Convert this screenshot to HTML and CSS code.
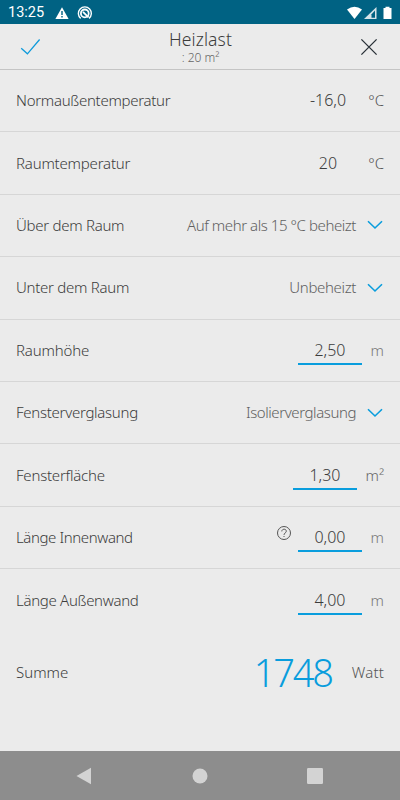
FILE: index.html
```html
<!DOCTYPE html>
<html lang="de">
<head>
<meta charset="utf-8">
<title>Heizlast</title>
<link rel="stylesheet" href="styles.css">
</head>
<body>
<div class="status">
  <span class="clock">13:25</span>
  <svg class="status-left" width="40" height="16" viewBox="0 0 40 16">
    <path d="M7 2.2 13.6 14H.4Z" fill="#fff"/><path d="M7 6v4M7 11v1.6" stroke="#006283" stroke-width="1.4"/>
    <path d="M25.7 13.4A6.5 6.5 0 1 1 34 13.4" fill="none" stroke="#fff" stroke-width="1.4"/>
    <circle cx="29.8" cy="8.4" r="3.9" fill="none" stroke="#fff" stroke-width="1.8"/>
    <path d="M28 6.8 33.5 12.3" stroke="#fff" stroke-width="1.8"/>
  </svg>
  <svg class="status-right" width="46" height="16" viewBox="0 0 46 16">
    <path d="M0 4.5Q7.5-.9 15 4.5L7.5 14Z" fill="#fff"/>
    <path d="M29.5 2V14H17Z" fill="#d5e3e9"/><path d="M24.5 9.2 28 5.6V12.8H24.5Z" fill="#006283"/>
    <path d="M36.5 3h2V1.7h4V3h2v11h-8Z" fill="#fff"/>
  </svg>
</div>
<header class="header">
  <svg width="21" height="18" viewBox="0 0 21 18"><path d="M1.2 10.2 7.4 15.8 19.6 1.5" fill="none" stroke="#0f9bdb" stroke-width="1.3"/></svg>
  <div class="heading"><h1>Heizlast</h1><p>: 20 m²</p></div>
  <svg width="18" height="18" viewBox="0 0 18 18"><path d="M1.4 1.4 16.6 16.6M16.6 1.4 1.4 16.6" stroke="#283037" stroke-width="1.3"/></svg>
</header>
<main class="rows">
  <div class="row"><span class="label l1">Normaußentemperatur</span><span class="number plain">-16,0</span><span class="unit">°C</span></div>
  <div class="row"><span class="label l2">Raumtemperatur</span><span class="number plain">20</span><span class="unit">°C</span></div>
  <div class="row"><span class="label l3">Über dem Raum</span><span class="choice c1">Auf mehr als 15 °C beheizt</span><svg class="chevron" width="16" height="10" viewBox="0 0 16 10"><path d="M1 1.2 8 8 15 1.2"/></svg></div>
  <div class="row"><span class="label l4">Unter dem Raum</span><span class="choice c2">Unbeheizt</span><svg class="chevron" width="16" height="10" viewBox="0 0 16 10"><path d="M1 1.2 8 8 15 1.2"/></svg></div>
  <div class="row"><span class="label l5">Raumhöhe</span><span class="number field">2,50</span><span class="unit metre">m</span></div>
  <div class="row"><span class="label l6">Fensterverglasung</span><span class="choice c3">Isolierverglasung</span><svg class="chevron" width="16" height="10" viewBox="0 0 16 10"><path d="M1 1.2 8 8 15 1.2"/></svg></div>
  <div class="row"><span class="label l7">Fensterfläche</span><span class="number field">1,30</span><span class="unit square">m²</span></div>
  <div class="row"><span class="label l8">Länge Innenwand</span><svg class="help" width="16" height="16" viewBox="0 0 16 16"><circle cx="8" cy="8" r="6.5"/><path d="M5.8 6.4C5.8 3.5 10.3 3.5 10.3 6.2 10.3 7.9 8 8 8 9.9M8 11v1"/></svg><span class="number field">0,00</span><span class="unit metre">m</span></div>
  <div class="row"><span class="label l9">Länge Außenwand</span><span class="number field">4,00</span><span class="unit metre">m</span></div>
</main>
<section class="total"><span class="label l10">Summe</span><span class="sum">1748</span><span class="unit watt">Watt</span></section>
<nav class="navbar">
  <svg width="16" height="18" viewBox="0 0 16 18"><path d="M.5 9 15 .8V17.2Z" stroke-linejoin="round"/></svg>
  <svg width="16" height="16" viewBox="0 0 16 16"><circle cx="8" cy="8" r="7.5"/></svg>
  <svg width="16" height="16" viewBox="0 0 16 16"><rect width="16" height="16" rx="1.2"/></svg>
</nav>
</body>
</html>
```

FILE: styles.css
```css
* { box-sizing: border-box; }
body { margin: 0; width: 400px; height: 800px; overflow: hidden; display: flex; flex-direction: column; background: #ebebeb; color: #3c3c3c; font-family: "Noto Sans", "Open Sans", sans-serif; font-weight: 300; }
svg { flex: none; display: block; }
span { white-space: nowrap; }
.status { height: 24px; flex: none; background: #006283; color: #fff; display: flex; align-items: center; padding: 1px 7px 0 8px; }
.clock { font: 400 14.5px/20px Roboto, sans-serif; width: 47px; padding-top: 1px; }
.status-right { margin-left: auto; }
.header { height: 46px; flex: none; display: flex; align-items: center; justify-content: space-between; padding: 0 22px 0 20px; border-bottom: 1px solid #c4c4c4; }
.heading { text-align: center; }
.heading h1 { margin: 0; font-size: 17.5px; font-weight: 300; line-height: 22px; letter-spacing: .1px; }
.heading p { margin: 0; font-size: 12px; line-height: 16px; color: #666; }
.rows { display: grid; grid-template-rows: repeat(9, 62.4px); flex: none; }
.row { display: flex; align-items: center; padding: 0 16px; border-bottom: 1px solid #d6d6d6; }
.row:last-child { border-bottom: 0; }
.label { font-size: 15px; line-height: 20px; margin-right: auto; padding-bottom: 1px; }
.l1 { letter-spacing: -.29px; }
.l2 { letter-spacing: -.2px; }
.l3, .l4 { letter-spacing: -.28px; }
.l5 { letter-spacing: -.15px; }
.l6 { letter-spacing: -.28px; }
.l7 { letter-spacing: -.22px; }
.l8 { letter-spacing: -.4px; }
.l9 { letter-spacing: -.3px; }
.number { font-size: 16px; line-height: 22px; width: 64px; text-align: center; }
.plain { padding-bottom: 1px; }
.field { height: 28px; padding-top: 2px; border-bottom: 2px solid #099ddd; position: relative; top: .5px; }
.unit { font-size: 15px; line-height: 20px; color: #555; width: 24px; text-align: right; }
.plain + .unit { padding-bottom: 1px; }
.metre { width: 22px; color: #777; }
.square { width: 27px; color: #666; }
.choice { font-size: 15px; line-height: 20px; color: #606060; margin-right: 11px; padding-bottom: 1px; }
.c1 { letter-spacing: -.43px; }
.c2 { letter-spacing: -.35px; }
.c3 { letter-spacing: -.42px; }
.chevron { fill: none; stroke: #099ddd; stroke-width: 1.6; margin-right: 1px; }
.help { fill: none; stroke: #555; stroke-width: 1; margin: 0 6px 8px 0; }
.total { flex: 1; display: flex; align-items: center; padding: 0 16px 38px; }
.sum { font-size: 38px; line-height: 50px; font-weight: 300; color: #099ddd; margin-right: 20px; letter-spacing: -2.2px; }
.watt { width: auto; letter-spacing: .2px; }
.navbar { height: 49px; flex: none; background: #8d8d8d; display: flex; align-items: center; justify-content: space-between; padding: 0 77px 0 76px; fill: #d3d3d3; }
```
